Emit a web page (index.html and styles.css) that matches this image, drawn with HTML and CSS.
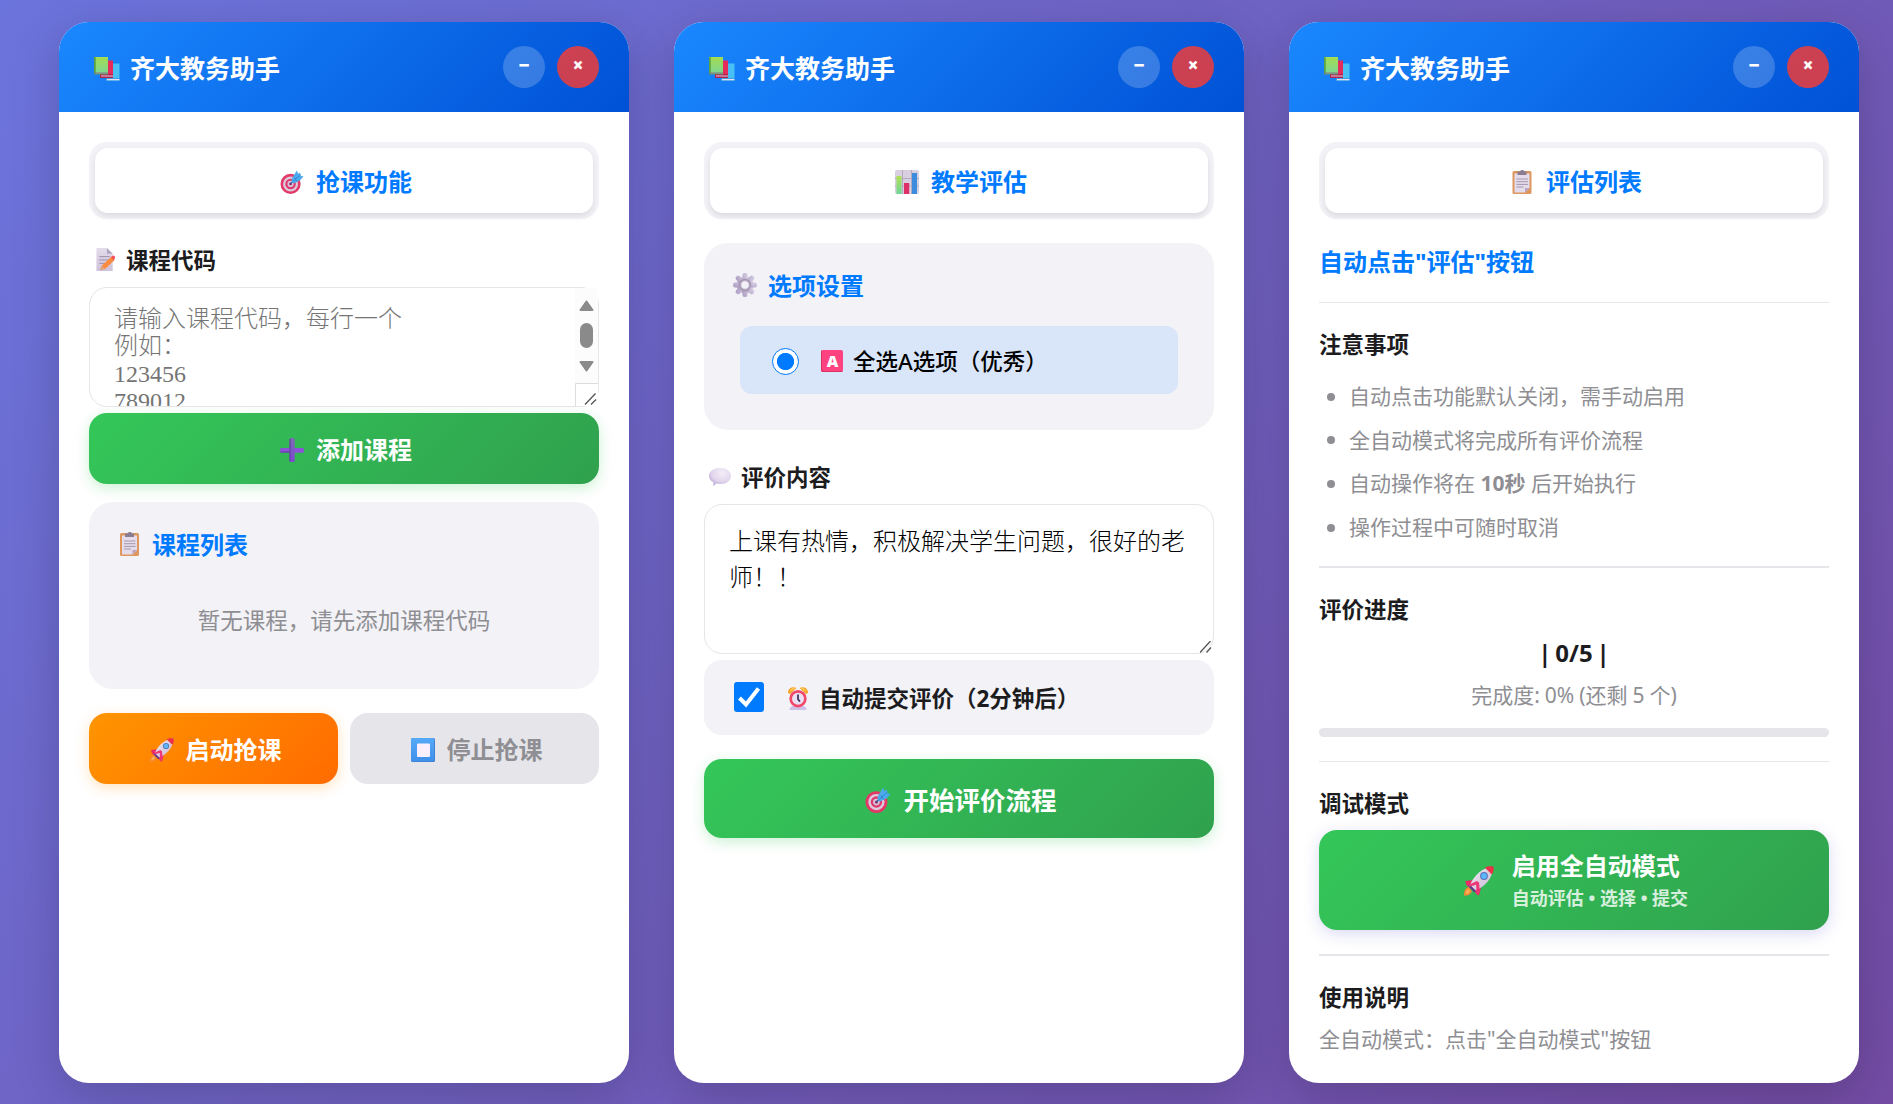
FILE: index.html
```html
<!DOCTYPE html>
<html lang="zh-CN">
<head>
    <meta charset="UTF-8">
    <meta name="viewport" content="width=device-width, initial-scale=1.0">
    <title>齐大教务助手</title>
    <link rel="stylesheet" href="styles.css">
</head>
<body>

    <!-- icon sprite -->
    <svg class="sprite" width="0" height="0">
        <defs>
            <linearGradient id="gGreen" x1="0" y1="0" x2="0" y2="1"><stop offset="0" stop-color="#a5dc50"/><stop offset="1" stop-color="#7fd68c"/></linearGradient>
            <linearGradient id="gPaper" x1="0" y1="0" x2="0" y2="1"><stop offset="0" stop-color="#e2dcea"/><stop offset="1" stop-color="#cfc2dc"/></linearGradient>
            <linearGradient id="gBlue" x1="0" y1="0" x2="0" y2="1"><stop offset="0" stop-color="#55aaf8"/><stop offset="1" stop-color="#4090ea"/></linearGradient>
            <linearGradient id="gPlus" x1="0" y1="0" x2="0" y2="1"><stop offset="0" stop-color="#7c6cb4"/><stop offset="1" stop-color="#7f47d2"/></linearGradient>
            <linearGradient id="gBar1" x1="0" y1="0" x2="0" y2="1"><stop offset="0" stop-color="#b2e253"/><stop offset="1" stop-color="#6cd69a"/></linearGradient>
            <linearGradient id="gGear" x1="1" y1="0" x2="0" y2="1"><stop offset="0" stop-color="#d9cfe5"/><stop offset="1" stop-color="#a99bbf"/></linearGradient>
            <radialGradient id="gTalk" cx=".6" cy=".3" r=".8"><stop offset="0" stop-color="#f4eef8"/><stop offset=".6" stop-color="#e0d5ec"/><stop offset="1" stop-color="#ab93d2"/></radialGradient>
            <linearGradient id="gBody" x1="0" y1="0" x2="1" y2="1"><stop offset="0" stop-color="#f1eaf3"/><stop offset="1" stop-color="#c9b6d2"/></linearGradient>
        </defs>
        <symbol id="books" viewBox="0 0 26 24">
            <path fill="#48c0f4" d="M18.500 6.500h7V21h-7z"/><path fill="#3aa2e2" d="M12 21h13.500v3H12z"/><path fill="#e6dcf3" d="M13 22h12.500v1.200H13z"/>
            <path fill="#e52b59" d="M12 3.500h7V18h-7z"/><path fill="#ad234d" d="M6 17h13v4H6z"/><path fill="#e6c7dc" d="M7 18.500h12v1H7z"/>
            <path fill="url(#gGreen)" d="M0 0h14v15H0z"/><path fill="#5aa447" d="M0 .5L1.800 0v15L0 15.500z"/><path fill="#68906c" d="M0 15h14v2.500H0z"/><path fill="#a8b9aa" d="M2 15.500h12v.8H2z"/>
        </symbol>
        <symbol id="target" viewBox="0 0 24 25">
            <circle cx="10.500" cy="14.500" r="10.500" fill="#e23a68"/><circle cx="10.500" cy="14.500" r="7.800" fill="#dfc9dd"/>
            <circle cx="10.500" cy="14.500" r="5.500" fill="#dc3c6e"/><circle cx="10.500" cy="14.500" r="3.200" fill="#dcc4dc"/>
            <circle cx="10.500" cy="14.500" r="1.500" fill="#8c3064"/>
            <path stroke="#2b66a8" stroke-width="1.300" d="M10.500 14.500l4-4"/>
            <path fill="#4dabed" d="M12 8.500l5-8 1.500 3.500L20.500 2.500l.5 3.500 3 .8-3.500 4L14 14l-2.500-2z"/>
            <path stroke="#2a7cc8" stroke-width=".8" d="M13 12l8-7M15 8l2 4"/>
        </symbol>
        <symbol id="memo" viewBox="0 0 20 24">
            <path fill="url(#gPaper)" d="M0 0h11l6 6v18H0z"/><path fill="#b3a5c2" d="M11 0l6 6h-6z"/>
            <path stroke="#9a8da8" stroke-width="1" d="M3 9h11M3 12.500h10M3 16h7"/>
            <path fill="#fb8b3d" d="M5.500 18.500L15.500 9l3.500 3.500L9 22l-5.500 1z"/><path fill="#f6535a" d="M15 9.500l2-1.500c1.500-.5 2.700 1 2.500 2.500l-1.500 2.500z"/>
            <path fill="#d9a788" d="M5.500 18.500L9 22l-5 1.200z"/>
        </symbol>
        <symbol id="plus" viewBox="0 0 24 24">
            <rect x="0" y="10" width="24" height="4.800" rx="1.500" fill="#8a53d8"/><rect x="9.500" y="0" width="5.200" height="24" rx="1.500" fill="url(#gPlus)"/>
            <path stroke="#5b3b95" d="M0.500 14h9M10 1v22"/>
        </symbol>
        <symbol id="clipboard" viewBox="0 0 19 24">
            <rect x="0" y="1" width="19" height="23" rx="1.500" fill="#de985f"/>
            <path fill="#e4dbeb" d="M2 3.500h15V18l-4.500 4.500H2z"/><path fill="#b9a2c0" d="M12.500 18H17l-4.500 4.500z"/>
            <path fill="#8b7d91" d="M5 1.500h2.500C8-.5 11.500-.5 12 1.500h2V5H5z"/>
            <path stroke="#a498b0" stroke-width="1" d="M4 9h11.500M4 11.700h11.500M4 14.400h11.500M4 17h7"/>
        </symbol>
        <symbol id="rocket" viewBox="0 0 30 30">
            <path fill="#f78a37" d="M5 21c-4 1-5 4-5 8.500 3 .5 6-.5 8-4z"/><path fill="#fbb25a" d="M5 23c-3 1-3 3-3 5 2 0 3-1 4-3z"/>
            <path fill="#ec2a66" d="M9 14L1.500 15c0 3 1 5 3.500 6l6 5c1 2 2 3 4 3.500l2-8z"/>
            <path fill="url(#gBody)" d="M29 1C19 1 10 9 6 19l5.500 5.500C21 20.500 29 12 29 1z"/>
            <path fill="#ec3048" d="M29.500.5C26 0 23.500 0 21 1.800l6.800 6.700C29.500 6 30 3.500 29.500.5z"/>
            <path fill="#5a3c8e" d="M5.500 18.500l6.500 6.500-1.500 1.500-6.500-6.500z"/>
            <path fill="#ef3775" d="M13 15c-5 2-8 3.500-9.500 6 4-1 7-1.500 8.500-2.500l.5 4c-1 2 0 5 1.500 6.500 2-4 1.500-9 1-12.500z"/>
            <circle cx="20" cy="10" r="3.900" fill="#5a6fae"/><circle cx="20" cy="10" r="2.900" fill="#5cb6fb"/>
        </symbol>
        <symbol id="stop" viewBox="0 0 24 24">
            <rect width="24" height="24" rx="1.500" fill="#3f83d9"/><rect x="0" y="0" width="23" height="23" rx="1.500" fill="url(#gBlue)"/><rect x="6" y="5.500" width="13" height="13.500" rx="1" fill="#fbeffd"/>
        </symbol>
        <symbol id="chart" viewBox="0 0 24 24">
            <rect width="24" height="24" rx="2" fill="#d8cfe0"/><path stroke="#b5abc0" d="M7.500 0v24M16.500 0v24M0 8.500h24M0 16h24"/>
            <rect x="1.500" y="6" width="5" height="18" fill="url(#gBar1)"/><rect x="9" y="13" width="5.200" height="11" fill="#dd2f68"/><rect x="17" y="3" width="5" height="21" fill="#3b8cdc"/>
        </symbol>
        <symbol id="gear" viewBox="-12 -12 24 24">
            <g fill="url(#gGear)"><circle r="8.500"/>
                <g id="teeth"><rect x="-2.500" y="-12" width="5" height="24" rx="2"/><rect x="-12" y="-2.500" width="24" height="5" rx="2"/></g>
                <use href="#teeth" transform="rotate(45)"/></g>
            <circle r="6.300" fill="#a395b2"/><circle r="5" fill="#baadc8"/><circle r="3.700" fill="#f2f1f7"/>
        </symbol>
        <symbol id="talk" viewBox="0 0 22 18">
            <path fill="url(#gTalk)" d="M11 0c6.500 0 11 3.500 11 8s-4.500 8-11 8c-1.500 0-2.700-.2-4-.5-1 1.500-2 2.500-3 2.200.8-1 .8-2.500.3-3.500C1.500 12.800 0 10.800 0 8c0-4.500 4.500-8 11-8z"/>
        </symbol>
        <symbol id="clock" viewBox="0 0 20 23">
            <path fill="#cfc2ea" d="M1.500 23c0-3 2-4 4-4h9c2 0 4 1 4 4z"/>
            <path fill="#f6a72c" d="M0 6c-.5-4 4-7.500 8.500-5L2 7zM20 6c.5-4-4-7.500-8.500-5L18 7z"/><path fill="#fccb58" d="M2 3l4-2.500 1 1L3 4zM14 .5L18 3l-1 1-4-2.500z"/>
            <circle cx="10" cy="11.700" r="8.700" fill="#f24869"/><circle cx="10" cy="11.700" r="6" fill="#eadff4"/>
            <path fill="none" stroke="#372c59" stroke-width="1.700" stroke-linecap="round" d="M10 8v4.200l1.500 1.800"/>
        </symbol>
    </svg>

    <!-- 抢课 -->
    <div class="panel">
        <div class="header">
            <div class="title"><svg class="icon-books"><use href="#books"/></svg>齐大教务助手</div>
            <div class="controls">
                <button class="round min">−</button>
                <button class="round close">×</button>
            </div>
        </div>
        <div class="content">
            <div class="tabs"><div class="tab"><svg class="icon"><use href="#target"/></svg>抢课功能</div></div>

            <label class="label"><svg class="icon-memo"><use href="#memo"/></svg>课程代码</label>
            <div class="field">
                <textarea class="codes" placeholder="请输入课程代码，每行一个&#10;例如：&#10;123456&#10;789012"></textarea>
                <div class="scrollbar">
                    <svg width="23" height="118" viewBox="0 0 23 118">
                        <path fill="#fcfcfc" d="M0 0h23v118H0z"/>
                        <path fill="#8a8a8a" stroke="#8a8a8a" stroke-width="2" stroke-linejoin="round" d="M11.500 13.500l-6 8.500h12zM11.500 82.500l-6-8.500h12z"/>
                        <rect x="5" y="35" width="13" height="25" rx="6.500" fill="#8a8a8a"/>
                        <path fill="#fff" stroke="#ddd" d="M.5 120V95.500H24V120z"/>
                        <path stroke="#555" stroke-width="1.300" d="M10 116.500l10.500-11M16 116.500l5-5"/>
                    </svg>
                </div>
            </div>
            <button class="btn green"><svg class="icon"><use href="#plus"/></svg>添加课程</button>

            <div class="card course-card">
                <h3><svg class="icon-clip"><use href="#clipboard"/></svg>课程列表</h3>
                <p class="empty">暂无课程，请先添加课程代码</p>
            </div>

            <div class="btn-row">
                <button class="btn orange"><svg class="icon"><use href="#rocket"/></svg>启动抢课</button>
                <button class="btn disabled"><svg class="icon"><use href="#stop"/></svg>停止抢课</button>
            </div>
        </div>
    </div>

    <!-- 教学评估 -->
    <div class="panel">
        <div class="header">
            <div class="title"><svg class="icon-books"><use href="#books"/></svg>齐大教务助手</div>
            <div class="controls">
                <button class="round min">−</button>
                <button class="round close">×</button>
            </div>
        </div>
        <div class="content">
            <div class="tabs"><div class="tab"><svg class="icon"><use href="#chart"/></svg>教学评估</div></div>

            <div class="card option-card">
                <h3><svg class="icon"><use href="#gear"/></svg>选项设置</h3>
                <label class="option">
                    <span class="radio"></span>
                    <span class="icon-a">A</span>全选A选项（优秀）
                </label>
            </div>

            <label class="label comment-label"><svg class="icon-talk"><use href="#talk"/></svg>评价内容</label>
            <div class="field">
                <textarea class="comment">上课有热情，积极解决学生问题，很好的老师！！</textarea>
                <svg class="grip" width="12" height="12" viewBox="0 0 12 12"><path stroke="#555" stroke-width="1.300" d="M0 11.500L10.500 0M6.500 11.500L11 6.500"/></svg>
            </div>

            <label class="auto-submit">
                <span class="checkbox"><svg width="30" height="30" viewBox="0 0 30 30"><path fill="none" stroke="#fff" stroke-width="4" d="M5.500 16l6.500 6.500L24.500 6.500"/></svg></span>
                <svg class="icon-clock"><use href="#clock"/></svg>自动提交评价（2分钟后）
            </label>

            <button class="btn green big"><svg class="icon-big"><use href="#target"/></svg>开始评价流程</button>
        </div>
    </div>

    <!-- 评估列表 -->
    <div class="panel">
        <div class="header">
            <div class="title"><svg class="icon-books"><use href="#books"/></svg>齐大教务助手</div>
            <div class="controls">
                <button class="round min">−</button>
                <button class="round close">×</button>
            </div>
        </div>
        <div class="content">
            <div class="tabs"><div class="tab"><svg class="icon"><use href="#clipboard"/></svg>评估列表</div></div>

            <h2>自动点击"评估"按钮</h2>

            <div class="section notes">
                <h4>注意事项</h4>
                <ul>
                    <li>自动点击功能默认关闭，需手动启用</li>
                    <li>全自动模式将完成所有评价流程</li>
                    <li>自动操作将在 <strong>10秒</strong> 后开始执行</li>
                    <li>操作过程中可随时取消</li>
                </ul>
            </div>

            <div class="section thick progress">
                <h4>评价进度</h4>
                <div class="count">| 0/5 |</div>
                <div class="percent">完成度: 0% (还剩 5 个)</div>
                <div class="bar"></div>
            </div>

            <div class="section debug">
                <h4>调试模式</h4>
                <button class="btn green auto">
                    <svg class="icon-rocket"><use href="#rocket"/></svg>
                    <span class="auto-text">启用全自动模式<small>自动评估 • 选择 • 提交</small></span>
                </button>
            </div>

            <div class="section thick">
                <h4>使用说明</h4>
                <p class="help">全自动模式：点击"全自动模式"按钮</p>
            </div>
        </div>
    </div>

</body>
</html>
```
FILE: styles.css
```css
* {
    box-sizing: border-box;
}
body {
    margin: 0;
    height: 1104px;
    padding: 22px 34px 0 59px;
    display: flex;
    justify-content: space-between;
    align-items: flex-start;
    overflow: hidden;
    font-family: "Noto Sans", "Noto Sans CJK SC", sans-serif;
    color: #1c1c1e;
    background: linear-gradient(135deg, #6b74dc 0%, #734ba3 100%);
}
.sprite {
    position: absolute;
}
h2, h3, h4, p, ul {
    margin: 0;
    padding: 0;
}
svg {
    display: block;
    flex: none;
}
button {
    border: none;
    font-family: inherit;
}
.panel {
    width: 570px;
    height: 1061px;
    border-radius: 30px;
    overflow: hidden;
    background: #fff;
    box-shadow: 0 12px 48px rgba(0, 0, 0, 0.18);
}
.header {
    height: 90px;
    padding: 0 30px 0 35px;
    display: flex;
    justify-content: space-between;
    align-items: center;
    color: #fff;
    background: linear-gradient(135deg, #1a88ff, #0051d5);
}
.title {
    display: flex;
    align-items: center;
    gap: 10px;
    font-size: 25px;
    font-weight: bold;
}
.icon-books {
    width: 26px;
    height: 24px;
    margin-top: 4px;
}
.controls {
    display: flex;
    gap: 12px;
}
.round {
    width: 42px;
    height: 42px;
    padding: 0 0 3px;
    border-radius: 50%;
    color: #fff;
    font-size: 19px;
    font-weight: 900;
    line-height: 1;
}
.min {
    background: rgba(255, 255, 255, 0.2);
}
.close {
    background: rgba(255, 59, 48, 0.8);
}
.content {
    padding: 30px;
}
.tabs {
    height: 77px;
    padding: 6px;
    border-radius: 18px;
    background: #f2f2f7;
}
.tab {
    height: 65px;
    display: flex;
    justify-content: center;
    align-items: center;
    gap: 12px;
    padding-left: 4px;
    border-radius: 13px;
    background: #fff;
    color: #007aff;
    font-size: 24px;
    font-weight: bold;
    box-shadow: 0 3px 6px rgba(0, 0, 0, 0.1);
}
.icon {
    width: 24px;
    height: 24px;
    margin-top: 2px;
}
.label {
    display: flex;
    align-items: center;
    height: 30px;
    margin: 25px 0 13px 7px;
    gap: 10px;
    font-size: 22.5px;
    font-weight: bold;
}
.icon-memo {
    width: 20px;
    height: 23px;
    margin-top: 1px;
}
.field {
    position: relative;
}
textarea {
    display: block;
    width: 100%;
    margin: 0;
    border: 1px solid #e5e5ea;
    border-radius: 18px;
    resize: none;
    overflow: hidden;
    outline: none;
    background: #fff;
    color: #000;
    font-family: "Liberation Serif", "Noto Sans CJK SC", serif;
    font-size: 24px;
    font-weight: 300;
}
.codes {
    height: 120px;
    padding: 18px 24px 0;
    line-height: 27.3px;
}
.codes::placeholder {
    color: #757575;
}
.scrollbar {
    position: absolute;
    top: 1px;
    right: 1px;
}
.btn {
    display: flex;
    justify-content: center;
    align-items: center;
    gap: 12px;
    width: 100%;
    height: 71px;
    padding: 0 0 0 4px;
    border-radius: 18px;
    color: #fff;
    font-size: 24px;
    font-weight: bold;
}
.green {
    background: linear-gradient(135deg, #34c759, #30a14e);
    box-shadow: 0 4px 14px rgba(52, 199, 89, 0.25);
}
.field + .green {
    margin-top: 6px;
}
.orange {
    background: linear-gradient(135deg, #ff9500, #ff6b00);
    box-shadow: 0 4px 14px rgba(255, 149, 0, 0.25);
}
.disabled {
    background: #e5e5ea;
    color: #8e8e93;
}
.card {
    height: 187px;
    border-radius: 24px;
    background: #f2f2f7;
}
.card h3 {
    display: flex;
    align-items: center;
    height: 36px;
    gap: 12px;
    color: #007aff;
    font-size: 24px;
}
.course-card {
    margin-top: 18px;
    padding: 23px 31px;
}
.icon-clip {
    width: 19px;
    height: 24px;
    margin-top: 2px;
}
.course-card h3 {
    gap: 13px;
}
.empty {
    margin-top: 44px;
    text-align: center;
    color: #8e8e93;
    font-size: 22.5px;
    line-height: 32px;
}
.btn-row {
    display: flex;
    gap: 12px;
    margin-top: 24px;
}
.option-card {
    margin-top: 24px;
    padding: 23px 36px;
}
.option-card h3 {
    margin-left: -7px;
    gap: 11px;
}
.option {
    display: flex;
    align-items: center;
    height: 68px;
    width: 438px;
    margin-top: 24px;
    padding: 1px 0 0 32px;
    border-radius: 12px;
    background: #d9e5f8;
    color: #000;
    font-size: 22.5px;
    font-weight: 500;
}
.radio {
    width: 27px;
    height: 27px;
    margin-top: 2px;
    border: 1.5px solid #007aff;
    border-radius: 50%;
    background: radial-gradient(circle, #007aff 8.2px, #fff 9px);
}
.icon-a {
    width: 22px;
    height: 22px;
    margin: 0 10px 0 22px;
    padding-left: 1px;
    border-radius: 2px;
    background: #ff4381;
    box-shadow: inset 1px -1px 0 #dc315f;
    color: #fff;
    font-size: 16px;
    font-weight: 900;
    line-height: 22px;
    text-align: center;
}
.comment-label {
    margin: 31px 0 13px 5px;
    gap: 10px;
}
.icon-talk {
    width: 22px;
    height: 18px;
    margin-top: 1px;
}
.comment {
    height: 150px;
    padding: 19px 24px;
    line-height: 36px;
}
.grip {
    position: absolute;
    right: 2px;
    bottom: 1px;
}
.auto-submit {
    display: flex;
    align-items: center;
    height: 75px;
    margin: 6px 0 24px;
    padding-left: 30px;
    border-radius: 18px;
    background: #f2f2f7;
    font-size: 22.5px;
    font-weight: bold;
}
.checkbox {
    width: 30px;
    height: 30px;
    margin-bottom: 2px;
    border-radius: 3px;
    background: #007aff;
}
.icon-clock {
    width: 20px;
    height: 23px;
    margin: 1px 11px 0 24px;
}
.big {
    height: 79px;
    font-size: 25.5px;
}
.icon-big {
    width: 26px;
    height: 26px;
    margin-top: 2px;
}
h2 {
    height: 83px;
    padding-top: 25px;
    color: #007aff;
    font-size: 24px;
    line-height: 36px;
}
.section {
    border-top: 1px solid #e5e5ea;
    padding-top: 26px;
}
.thick {
    border-top-width: 2px;
}
h4 {
    font-size: 22.5px;
    line-height: 32px;
}
.notes {
    height: 264px;
}
ul {
    margin-top: 14px;
    padding-left: 30px;
    list-style: none;
    color: #8e8e93;
    font-size: 21px;
    line-height: 43.6px;
}
li::before {
    content: "";
    display: inline-block;
    width: 8px;
    height: 8px;
    margin: 0 14px 3px -22px;
    border-radius: 50%;
    background: #8e8e93;
    vertical-align: middle;
}
.progress {
    height: 195px;
    text-align: center;
}
.progress h4 {
    text-align: left;
}
.count {
    margin-top: 10px;
    font-size: 24px;
    font-weight: bold;
    line-height: 33px;
    word-spacing: -2.5px;
}
.percent {
    margin-top: 10px;
    color: #8e8e93;
    font-size: 21px;
    line-height: 32px;
    word-spacing: -0.5px;
}
.bar {
    height: 9px;
    margin-top: 17px;
    border-radius: 5px;
    background: #e5e5ea;
}
.debug {
    height: 193px;
}
.auto {
    height: 100px;
    margin-top: 10px;
    gap: 18px;
    box-shadow: 0 4px 16px rgba(88, 86, 214, 0.22);
}
.icon-rocket {
    width: 30px;
    height: 30px;
    margin-top: 2px;
}
.auto-text {
    text-align: left;
    line-height: 37px;
}
.auto-text small {
    display: block;
    font-size: 18px;
    line-height: 29px;
    opacity: 0.8;
}
.help {
    margin-top: 9px;
    color: #8e8e93;
    font-size: 21px;
    line-height: 32px;
}
```
